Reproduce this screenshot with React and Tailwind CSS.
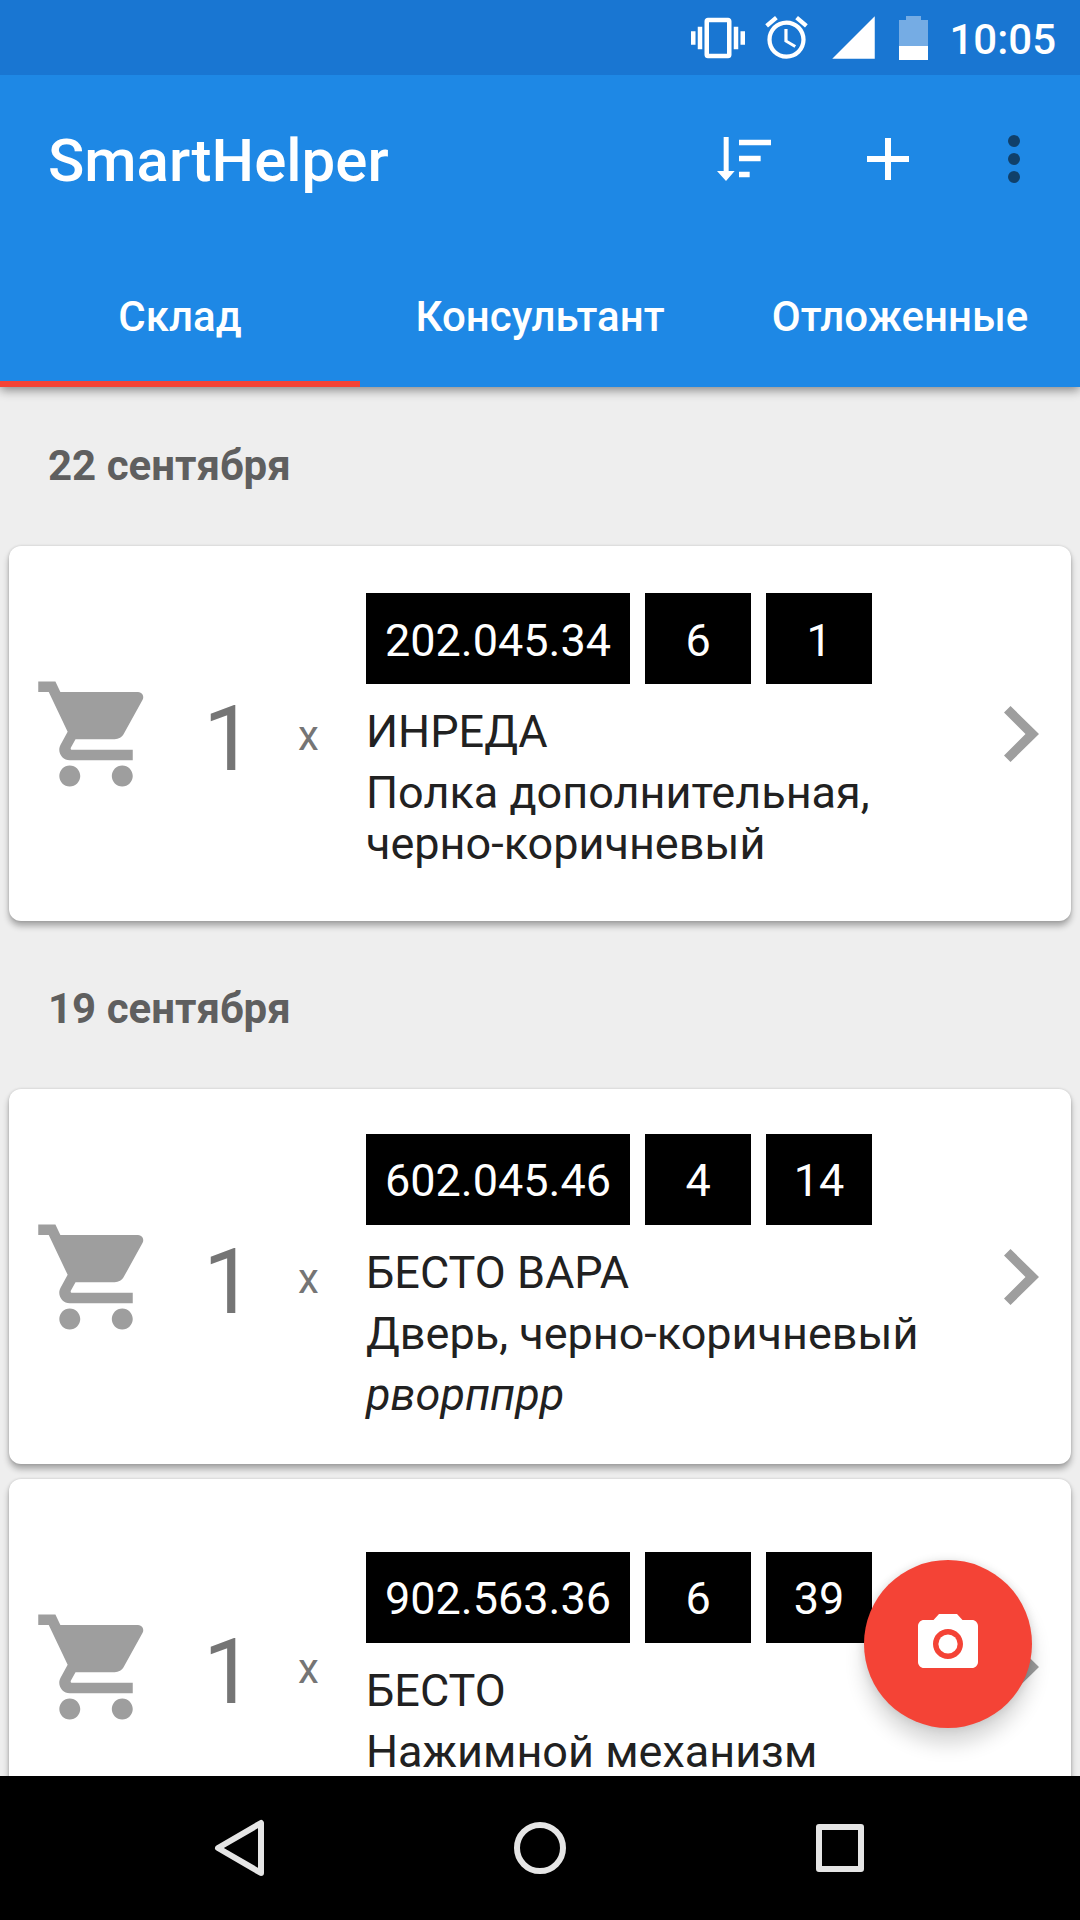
import React, { useState } from "react";
import {
  MdAccessAlarm,
  MdPhotoCamera,
  MdShoppingCart,
  MdSignalCellular4Bar,
  MdVibration,
} from "react-icons/md";

const tabs = ["Склад", "Консультант", "Отложенные"];

const groups = [
  {
    date: "22 сентября",
    items: [
      {
        count: 1,
        article: "202.045.34",
        row: 6,
        place: 1,
        name: "ИНРЕДА",
        description: "Полка дополнительная, черно-коричневый",
      },
    ],
  },
  {
    date: "19 сентября",
    items: [
      {
        count: 1,
        article: "602.045.46",
        row: 4,
        place: 14,
        name: "БЕСТО ВАРА",
        description: "Дверь, черно-коричневый",
        comment: "рворппрр",
      },
      {
        count: 1,
        article: "902.563.36",
        row: 6,
        place: 39,
        name: "БЕСТО",
        description: "Нажимной механизм",
      },
    ],
  },
];

const App = () => {
  return (
    <div className="flex h-screen flex-col overflow-hidden bg-[#eeeeee] font-['Roboto',sans-serif]">
      <StatusBar />
      <TopBar />
      <main className="relative min-h-0 flex-1 overflow-hidden">
        {groups.map((group) => (
          <Group key={group.date} group={group} />
        ))}
        <button
          aria-label="Сканировать"
          className="absolute right-12 bottom-12 flex size-[168px] items-center justify-center rounded-full bg-[#f44336] text-white shadow-[0_16px_20px_rgba(0,0,0,0.16),0_0_10px_rgba(0,0,0,0.12)]"
        >
          <MdPhotoCamera className="size-[72px]" />
        </button>
      </main>
      <NavigationBar />
    </div>
  );
};

export default App;

const StatusBar = () => {
  return (
    <div className="relative z-20 flex h-[75px] shrink-0 items-center justify-end bg-[#1976d2] pr-6 text-white">
      <div className="flex items-center gap-4">
        <MdVibration className="size-[54px]" />
        <MdAccessAlarm className="size-[51px]" />
        <MdSignalCellular4Bar className="size-[51px]" />
      </div>
      <svg className="ml-5 h-11 w-[29px]" viewBox="0 0 29 44" fill="currentColor">
        <path d="M7 0h15v4h7v26H0V4h7z" fillOpacity="0.4" />
        <path d="M0 30h29v14H0z" />
      </svg>
      <span className="ml-[21px] pt-1 text-[42px] leading-none font-medium">10:05</span>
    </div>
  );
};

const TopBar = () => {
  const [active, setActive] = useState(0);

  return (
    <header className="relative z-10 shrink-0 bg-[#1e88e5] text-white shadow-[0_3px_10px_rgba(0,0,0,0.45)]">
      <div className="flex h-[168px] items-center justify-between pr-15 pl-12">
        <h1 className="pt-1 text-[60px] font-medium">SmartHelper</h1>
        <div className="flex items-center">
          <button aria-label="Сортировка">
            <svg className="h-11 w-[54px]" viewBox="0 0 162 132" fill="currentColor">
              <path d="M20 0h15v102h18L27 132 0 102h20z" />
              <path d="M66 8h96v17H66zM66 56h65v17H66zM66 104h32v17H66z" />
            </svg>
          </button>
          <button aria-label="Добавить" className="ml-24">
            <svg className="size-[42px]" viewBox="0 0 42 42" fill="currentColor">
              <path d="M18 0h6v18h18v6H24v18h-6V24H0v-6h18z" />
            </svg>
          </button>
          <button aria-label="Меню" className="ml-[99px]">
            <svg className="h-12 w-3" viewBox="0 0 12 48" fill="#10406a">
              <circle cx="6" cy="6" r="6" />
              <circle cx="6" cy="24" r="6" />
              <circle cx="6" cy="42" r="6" />
            </svg>
          </button>
        </div>
      </div>
      <div role="tablist" className="grid h-36 grid-cols-3">
        {tabs.map((tab, index) => (
          <button
            key={tab}
            role="tab"
            aria-selected={active === index}
            onClick={() => setActive(index)}
            className={`${
              active === index ? "border-[#f44336]" : "border-transparent"
            } border-b-6 pt-2 text-[42px] font-medium`}
          >
            {tab}
          </button>
        ))}
      </div>
    </header>
  );
};

const Group = ({ group }) => {
  return (
    <section className="pb-[9px]">
      <h2 className="flex h-[159px] items-center px-12 pb-0.5 text-[42px] font-bold text-[#5f5f5f]">
        {group.date}
      </h2>
      <ul className="flex flex-col gap-[15px] px-[9px]">
        {group.items.map((item) => (
          <Item key={item.article} item={item} />
        ))}
      </ul>
    </section>
  );
};

const Item = ({ item }) => {
  return (
    <li className="flex min-h-[375px] items-center rounded-xl bg-white pr-8 pl-6 shadow-[0_5px_6px_rgba(0,0,0,0.3),0_0_3px_rgba(0,0,0,0.15)]">
      <MdShoppingCart className="size-[126px] shrink-0 text-[#9e9e9e]" />
      <span className="w-[139px] shrink-0 pt-3 text-center text-[90px] leading-none text-[#757575]">
        {item.count}
      </span>
      <span className="w-[68px] shrink-0 pt-1 text-[42px] text-[#757575]">x</span>
      <div className="min-w-0 flex-1 text-[45px] leading-[51px] text-[#212121]">
        <div className="mb-[22px] flex gap-[15px]">
          <Tag>{item.article}</Tag>
          <Tag>{item.row}</Tag>
          <Tag>{item.place}</Tag>
        </div>
        <p>{item.name}</p>
        <p className="mt-[10px] last:mb-[5px]">{item.description}</p>
        {item.comment && <p className="mt-[10px] italic">{item.comment}</p>}
      </div>
      <button aria-label="Открыть" className="shrink-0 text-[#9e9e9e]">
        <svg className="h-14 w-[35px]" viewBox="0 0 35 56" fill="currentColor">
          <path d="M6.5 0L35 28 6.5 56 0 49.500 21.500 28 0 6.500z" />
        </svg>
      </button>
    </li>
  );
};

const Tag = ({ children }) => {
  return (
    <span className="flex h-[91px] min-w-[106px] items-center justify-center bg-black px-[19px] pt-[3px] text-white">
      {children}
    </span>
  );
};

const NavigationBar = () => {
  return (
    <nav className="flex h-36 shrink-0 items-center bg-black px-[90px] text-[#e5e5e5]">
      <button aria-label="Назад" className="flex flex-1 justify-center">
        <svg className="size-15" viewBox="0 0 60 60" fill="none" stroke="currentColor" strokeWidth="6" strokeLinejoin="round">
          <path d="M51 5v50L8 30z" />
        </svg>
      </button>
      <button aria-label="Домой" className="flex flex-1 justify-center">
        <svg className="size-15" viewBox="0 0 60 60" fill="none" stroke="currentColor" strokeWidth="6">
          <circle cx="30" cy="30" r="23" />
        </svg>
      </button>
      <button aria-label="Недавние" className="flex flex-1 justify-center">
        <svg className="size-15" viewBox="0 0 60 60" fill="none" stroke="currentColor" strokeWidth="6" strokeLinejoin="round">
          <rect x="9" y="9" width="42" height="42" />
        </svg>
      </button>
    </nav>
  );
};
